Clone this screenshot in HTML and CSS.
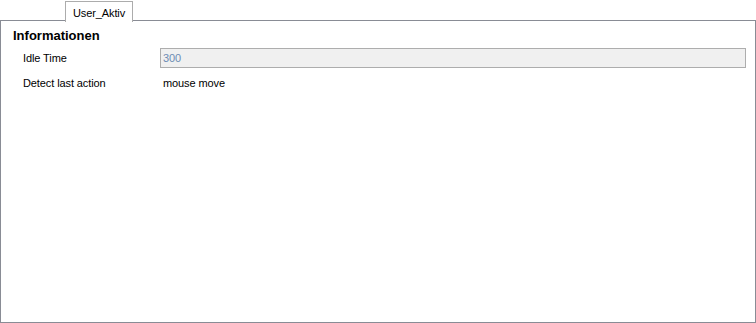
FILE: index.html
```html
<!DOCTYPE html>
<html>
<head>
<meta charset="utf-8">
<link rel="stylesheet" href="styles.css">
</head>
<body>
<div class="tabstrip">
  <div class="tab">User_Aktiv</div>
</div>
<div class="panel">
  <div class="heading">Informationen</div>
  <div class="row">
    <div class="label">Idle Time</div>
    <div class="input">300</div>
  </div>
  <div class="row row2">
    <div class="label">Detect last action</div>
    <div class="value">mouse move</div>
  </div>
</div>
</body>
</html>
```
FILE: styles.css
```css
html, body {
  margin: 0;
  padding: 0;
  background: #ffffff;
}
body {
  width: 756px;
  height: 323px;
  font-family: "Liberation Sans", Arial, sans-serif;
  font-size: 11px;
  color: #000;
}
.tabstrip {
  height: 20px;
  padding-left: 65px;
  padding-top: 1px;
  box-sizing: border-box;
  display: flex;
  position: relative;
  z-index: 1;
}
.tab {
  width: 68px;
  height: 21px;
  border: 1px solid #acacac;
  border-bottom: none;
  background: #fff;
  box-sizing: border-box;
  display: flex;
  justify-content: center;
  align-items: center;
  padding-top: 1px;
  letter-spacing: -0.1px;
}
.panel {
  height: 303px;
  border: 1px solid #898c95;
  box-sizing: border-box;
  padding: 7px 0 0 12px;
}
.heading {
  font-weight: bold;
  font-size: 13px;
  line-height: 16px;
}
.row {
  display: flex;
  align-items: center;
  margin-top: 4px;
  padding-left: 10px;
  letter-spacing: -0.1px;
}
.row2 {
  margin-top: 5px;
}
.label {
  width: 137px;
}
.input {
  width: 586px;
  height: 20px;
  box-sizing: border-box;
  border: 1px solid #adadad;
  background: #f0f0f0;
  color: #6d8cb4;
  padding: 0 0 0 2px;
  display: flex;
  align-items: center;
  font-size: 11px;
}
.value {
  padding-left: 3px;
  height: 20px;
  display: flex;
  align-items: center;
}
```
